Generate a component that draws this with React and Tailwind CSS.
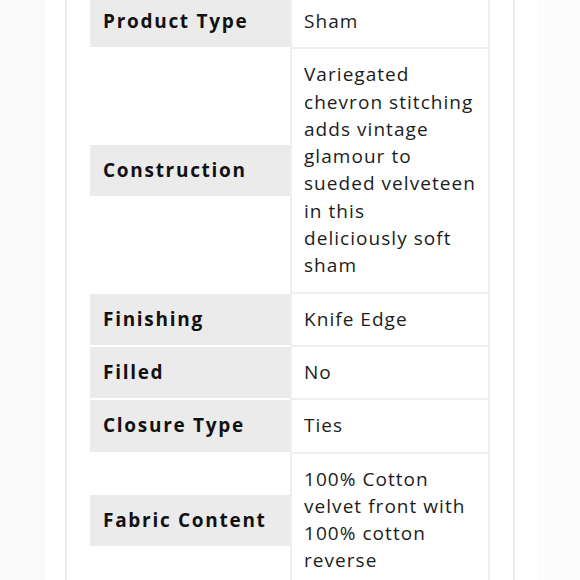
const rows = [
  { label: "Product Type", lines: ["Sham"] },
  {
    label: "Construction",
    lines: [
      "Variegated",
      "chevron stitching",
      "adds vintage",
      "glamour to",
      "sueded velveteen",
      "in this",
      "deliciously soft",
      "sham",
    ],
  },
  { label: "Finishing", lines: ["Knife Edge"] },
  { label: "Filled", lines: ["No"] },
  { label: "Closure Type", lines: ["Ties"] },
  {
    label: "Fabric Content",
    lines: ["100% Cotton", "velvet front with", "100% cotton", "reverse"],
  },
];

const SpecRow = ({ label, lines }) => (
  <div className="flex">
    <div className="w-[200px] flex items-center border-b-2 border-white">
      <div className="w-full bg-[#ebebeb] px-[13px] py-3 leading-[27.3px] font-bold text-[#111] tracking-[0.09em]">
        {label}
      </div>
    </div>
    <div className="w-[200px] border-x-2 border-b-2 border-[#efefef] pl-3 pr-[6px] py-3 leading-[27.3px] text-[#1c1c1c] tracking-[0.055em]">
      {lines.map((line, i) => (
        <div key={i}>{line}</div>
      ))}
    </div>
  </div>
);

const App = () => {
  return (
    <div
      className="w-[580px] h-[580px] overflow-hidden bg-white flex"
      style={{ fontFamily: "'Open Sans', 'Noto Sans', sans-serif" }}
    >
      <div className="w-[45px] bg-[#fafafa]" />
      <div className="w-[20px]" />
      <div className="w-[450px] border-x-2 border-[#efedeb] text-[19px]">
        <div className="mt-[-4px] ml-[23px]">
          {rows.map((row) => (
            <SpecRow key={row.label} label={row.label} lines={row.lines} />
          ))}
        </div>
      </div>
      <div className="w-[22px]" />
      <div className="flex-1 bg-[#fcfcfc]" />
    </div>
  );
};

export default App;
